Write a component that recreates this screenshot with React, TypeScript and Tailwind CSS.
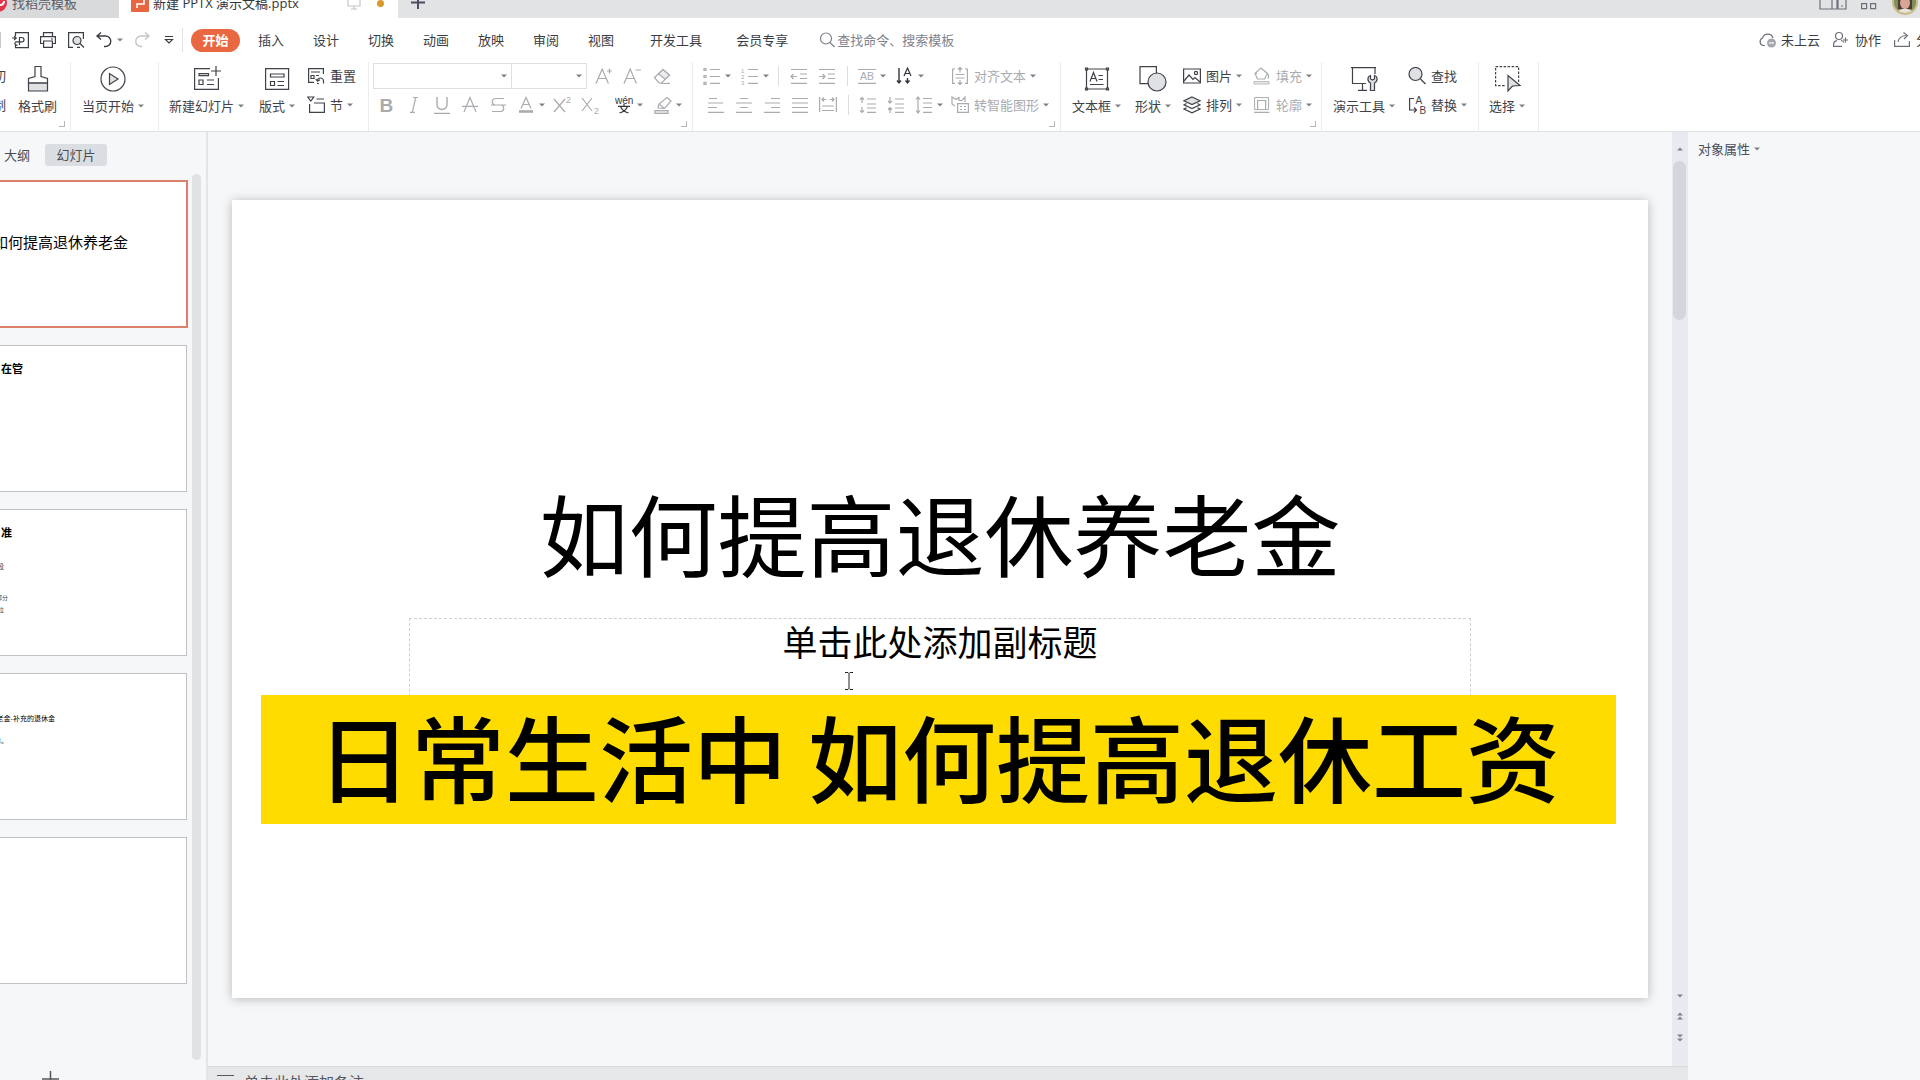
import type { ReactNode } from "react";
import clsx from "clsx";

interface IconProps {
  size?: number;
  children: ReactNode;
  className?: string;
}

// Line icon on a square grid; small icons use 18, large ones 28
function Icon({ size = 18, children, className }: IconProps) {
  return (
    <svg
      width={size}
      height={size}
      viewBox={`0 0 ${size} ${size}`}
      fill="none"
      stroke="currentColor"
      strokeWidth="1.2"
      className={clsx("shrink-0", className)}
      aria-hidden="true"
    >
      {children}
    </svg>
  );
}

function Caret({ up = false }: { up?: boolean }) {
  return (
    <svg width="6" height="4" viewBox="0 0 6 4" className="shrink-0 text-[#7d8087]" aria-hidden="true">
      <path d={up ? "M0 3.5h6L3 .5z" : "M0 .5h6L3 3.5z"} fill="currentColor" />
    </svg>
  );
}

function IconText({ x, y, size, children, bold }: { x: number; y: number; size: number; children: string; bold?: boolean }) {
  return (
    <text x={x} y={y} fontSize={size} fill="currentColor" stroke="none" fontWeight={bold ? 700 : 400} className="font-['Liberation_Sans',sans-serif]">
      {children}
    </text>
  );
}

interface ToolProps {
  label: string;
  children: ReactNode;
  caret?: boolean;
  active?: boolean;
  className?: string;
}

function Tool({ label, children, caret, active, className }: ToolProps) {
  return (
    <button
      type="button"
      aria-label={label}
      className={clsx(
        "flex h-7 shrink-0 items-center gap-1 pl-[5px]",
        caret ? "w-9" : "w-7",
        active ? "text-[#33363c]" : "text-[#a9abaf]",
        className
      )}
    >
      {children}
      {caret && <Caret />}
    </button>
  );
}

function LabelTool({ label, icon, caret, disabled }: { label: string; icon: ReactNode; caret?: boolean; disabled?: boolean }) {
  return (
    <button
      type="button"
      className={clsx("flex h-7 items-center gap-1 whitespace-nowrap", disabled ? "text-[#a9abaf]" : "text-[#3f4248]")}
    >
      {icon}
      <span className="pl-px">{label}</span>
      {caret && <Caret />}
    </button>
  );
}

function BigTool({ label, icon, caret }: { label: string; icon: ReactNode; caret?: boolean }) {
  return (
    <button type="button" className="flex flex-col items-center gap-[3px] pt-[3px] whitespace-nowrap text-[#3f4248]">
      {icon}
      <span className="flex items-center gap-1 leading-5">
        {label}
        {caret && <Caret />}
      </span>
    </button>
  );
}

function Group({ children, className, corner }: { children: ReactNode; className: string; corner?: boolean }) {
  return (
    <div className={clsx("relative flex shrink-0 items-start border-r border-[#ececee]", className)}>
      {children}
      {corner && <span className="absolute right-[5px] bottom-1 size-[6px] border-r border-b border-[#b5b7bb]" />}
    </div>
  );
}

function Rows({ children, className }: { children: ReactNode; className?: string }) {
  return <div className={clsx("flex flex-col gap-px", className)}>{children}</div>;
}

function Divider({ className }: { className: string }) {
  return (
    <span className={clsx("flex h-5 shrink-0 justify-center", className)}>
      <span className="w-px bg-[#dcdde0]" />
    </span>
  );
}

function Dropdown({ label, className }: { label: string; className: string }) {
  return (
    <div className={clsx("relative", className)}>
      <select aria-label={label} className="size-full appearance-none bg-white px-2 outline-none">
        <option value="" />
      </select>
      <span className="pointer-events-none absolute inset-y-0 right-1 flex items-center">
        <Caret />
      </span>
    </div>
  );
}

function TabBar() {
  return (
    <header className="flex h-[18px] shrink-0 items-end overflow-hidden bg-[#e1e3e4]">
      <button type="button" className="flex h-[30px] w-[119px] shrink-0 items-center gap-1 bg-[#d8dadc] text-[#5c5f66]">
        <svg width="8" height="18" viewBox="0 0 8 18" className="shrink-0" aria-hidden="true">
          <circle cx="-2" cy="9" r="9" fill="#e3324a" />
          <path d="M0 11q4 0 4-4" stroke="#fff" strokeWidth="2" fill="none" />
        </svg>
        找稻壳模板
      </button>
      <button
        type="button"
        className="flex h-[30px] w-[279px] shrink-0 items-center bg-white pl-3 font-['Open_Sans','Noto_Sans_CJK_SC',sans-serif] whitespace-nowrap text-[#33363c]"
      >
        <svg width="18" height="18" viewBox="0 0 18 18" className="mr-1 shrink-0" aria-hidden="true">
          <rect width="18" height="18" rx="1" fill="#e8663f" />
          <path d="M4 5h9v5H6v4" stroke="#fff" strokeWidth="1.6" fill="none" />
        </svg>
        新建 PPTX 演示文稿.pptx
        <Icon size={14} className="mr-4 ml-auto text-[#c3c5c9]">
          <path d="M1 1h12v9H1zM7 10v3M4 13h6" />
        </Icon>
        <span className="mr-[14px] size-[7px] rounded-full bg-[#d99a2b]" />
      </button>
      <button type="button" aria-label="新建标签" className="ml-[13px] flex h-[30px] items-center text-[#4b4d66]">
        <Icon size={14}>
          <path d="M7 0v13M0 6.500h14" strokeWidth="2" />
        </Icon>
      </button>
      <div className="ml-auto flex h-[30px] items-center text-[#6d7079]">
        <Icon size={28}>
          <path d="M1 4h12v16H1zM13 4h5v16h-5M19 8h8v12h-8zM22 17h2" />
        </Icon>
        <Icon size={28} className="ml-2">
          <path d="M6.600 4.600h5v5h-5zM15.600 4.600h5v5h-5zM6.600 14.600h5v5h-5zM15.600 14.600h5v5h-5z" />
        </Icon>
        <svg width="28" height="28" viewBox="0 0 28 28" className="mr-px ml-2" aria-hidden="true">
          <circle cx="14" cy="13" r="13" fill="#cdbb8a" />
          <circle cx="14" cy="13" r="11" fill="#7d8f5c" />
          <path d="M7 10q7-8 14 0v10H7z" fill="#4d3b33" />
          <ellipse cx="14" cy="14" rx="5" ry="6" fill="#d9a594" />
          <path d="M7 22q7-5 14 0q-7 4-14 0" fill="#e9e2dc" />
        </svg>
      </div>
    </header>
  );
}

const MENUS = ["插入", "设计", "切换", "动画", "放映", "审阅", "视图"];

function MenuBar() {
  return (
    <div className="flex h-11 shrink-0 items-center overflow-hidden bg-white whitespace-nowrap text-[#3a3d43]">
      <div className="flex shrink-0 items-center">
        <span className="h-4 w-px bg-[#c4c6ca]" />
        <button type="button" aria-label="输出为PDF" className="ml-[10px]">
          <Icon>
            <path d="M4.500 5V1.600h12.900v15H4.500V13M1 7h4l-1.800-2M5 7 3.200 9M8.500 14V6.500h2.300a2.200 2.200 0 0 1 0 4.400H5.500a1.600 1.600 0 0 0 0 3.200h1" />
          </Icon>
        </button>
        <button type="button" aria-label="打印" className="ml-[10px]">
          <Icon>
            <path d="M4.500 5V1.600h9V5M4.500 12.500H1.600V5.600h14.800v6.900h-2.900M4.600 10h8.800v6.400H4.600z" />
            <path d="M12 8h2" />
          </Icon>
        </button>
        <button type="button" aria-label="打印预览" className="ml-[10px]">
          <Icon>
            <path d="M6 16.400H1.600V1.600h14.800V8" />
            <circle cx="10" cy="9.500" r="4" fill="#dfe1e4" />
            <path d="m13 12.500 4 4M10 16.400h3" />
          </Icon>
        </button>
        <button type="button" aria-label="撤销" className="ml-[10px] flex items-center gap-1">
          <Icon>
            <path d="M6 1.500 2 5l4 3.500M2 5h8.500a5 5 0 0 1 0 10.500H9" strokeWidth="1.400" />
          </Icon>
          <Caret />
        </button>
        <button type="button" aria-label="恢复" className="ml-[10px] text-[#c3c5c9]">
          <Icon>
            <path d="m12 1.500 4 3.500-4 3.500M16 5H8a5 5 0 0 0 0 10.500h1" strokeWidth="1.400" />
          </Icon>
        </button>
        <button type="button" aria-label="自定义快速访问工具栏" className="ml-[13px]">
          <Icon size={10}>
            <path d="M1 1.500h8M1.500 4.500 5 8l3.500-3.500z" />
          </Icon>
        </button>
        <span className="ml-2 h-6 w-px bg-[#e3e4e6]" />
      </div>

      <nav className="flex shrink-0 items-center">
        <button type="button" className="ml-2 h-[23px] w-[49px] rounded-full bg-[#ea6841] font-bold text-white">
          开始
        </button>
        <div className="ml-[18px] flex gap-[29px]">
          {MENUS.map((m) => (
            <button key={m} type="button">
              {m}
            </button>
          ))}
        </div>
        <div className="ml-9 flex gap-[34px]">
          <button type="button">开发工具</button>
          <button type="button">会员专享</button>
        </div>
      </nav>

      <label className="ml-[31px] flex items-center text-[#7f828d]">
        <Icon>
          <circle cx="7" cy="7.500" r="5.500" />
          <path d="m11 11.500 4.500 4.500" />
        </Icon>
        <input
          type="text"
          aria-label="查找命令"
          placeholder="查找命令、搜索模板"
          className="w-32 outline-none placeholder:text-[#7f828d] placeholder:opacity-100"
        />
      </label>

      <div className="-mr-[22px] ml-auto flex shrink-0 items-center">
        <button type="button" className="flex items-center gap-[5px]">
          <Icon>
            <path d="M7 14.500H5a4 4 0 0 1-.5-7.500 5.500 5.500 0 0 1 10.500 0" stroke="#6d7079" />
            <circle cx="13.500" cy="12" r="4.500" fill="#a3a6ad" stroke="none" />
            <path d="M11 12h5" stroke="#fff" />
          </Icon>
          未上云
        </button>
        <button type="button" className="ml-3 flex items-center gap-[5px]">
          <Icon className="text-[#6d7079]">
            <circle cx="7" cy="5" r="3.500" />
            <path d="M10 15.400H1.600v-2q0-3 3.400-3.800M9 9.500q2 .3 3 2M11 9h5M13.500 6.500v5" />
          </Icon>
          协作
        </button>
        <button type="button" className="ml-3 flex items-center gap-[5px]">
          <Icon className="text-[#6d7079]">
            <path d="M1.600 9v6.400h14.800V10M5 11q1-6 8-6.500M10.500 1.500l4 3-3.500 3.500" />
          </Icon>
          分享
        </button>
      </div>
    </div>
  );
}

function Ribbon() {
  return (
    <div className="flex h-[70px] shrink-0 overflow-hidden border-b border-[#e2e3e5] bg-white">
      <Group className="w-[71px]" corner>
        <Rows className="w-[6px] items-end overflow-hidden text-[#3f4248]">
          <button type="button" className="h-7">切</button>
          <button type="button" className="h-7">制</button>
        </Rows>
        <div className="ml-3">
          <BigTool
            label="格式刷"
            icon={
              <Icon size={28}>
                <path d="M4.500 18h19v8h-19z" fill="#dfe1e4" />
                <path d="M4.500 18v-4.500l6.500-2V1.500h6v10l6.500 2V18z" />
              </Icon>
            }
          />
        </div>
      </Group>

      <Group className="w-[88px] pl-[11px]">
        <BigTool
          label="当页开始"
          caret
          icon={
            <Icon size={28}>
              <circle cx="14" cy="14" r="12" />
              <path d="M10.500 8.500v11l8.500-5.500z" fill="#dfe1e4" />
            </Icon>
          }
        />
      </Group>

      <Group className="w-[210px] pl-[10px]">
        <BigTool
          label="新建幻灯片"
          caret
          icon={
            <Icon size={28}>
              <path d="M17 3.600H1.600v20.800h23.800V13M18 6h10M23 1v10M14 15h7M14 19.500h7" />
              <path d="M6 15h4v4.500H6zM6 8.600h9.500v2H6z" />
            </Icon>
          }
        />
        <div className="ml-[15px]">
          <BigTool
            label="版式"
            caret
            icon={
              <Icon size={28}>
                <path d="M2.600 3.600h23v20.800h-23zM7.500 9h13.500v3H7.500zM7.500 16.500h4v4h-4zM14.500 16.500H21M14.500 20.500H21" />
              </Icon>
            }
          />
        </div>
        <Rows className="ml-3">
          <LabelTool
            label="重置"
            icon={
              <Icon>
                <path d="M7 15.400H1.600V1.600h14.800V7M4 5h9M4 8.500h3v3H4zM9 8.500h3M10 16.500h2M16.500 16.500v-2.500a3 3 0 0 0-6 0M8.800 12l1.700 2.300 2.500-1.500" />
              </Icon>
            }
          />
          <LabelTool
            label="节"
            caret
            icon={
              <Icon>
                <path d="M.8 1h6L3.800 5zM9.500 3h7.500M2.600 8v8.400h14.800V7H7" />
              </Icon>
            }
          />
        </Rows>
      </Group>

      <Group className="w-[324px] pl-[3px]" corner>
        <Rows>
          <div className="flex h-7 items-center">
            <div className="ml-px flex h-[26px] w-[214px] border border-[#dfe0e2]">
              <Dropdown label="字体" className="w-[138px] border-r border-[#dfe0e2]" />
              <Dropdown label="字号" className="flex-1" />
            </div>
            <Tool label="增大字号" className="ml-[3px]">
              <Icon>
                <path d="M1 16.500 7.200 2l6.200 14.500M3.400 11.500H11M14.500 1.500v5M12 4h5" />
              </Icon>
            </Tool>
            <Tool label="减小字号">
              <Icon>
                <path d="M1 16.500 7.200 2l6.200 14.500M3.400 11.500H11M12.500 3H18" />
              </Icon>
            </Tool>
            <Tool label="清除格式" className="ml-[2px]">
              <Icon>
                <path d="m1.500 10.500 8.500-8 6.500 5.500-8 8H6z" />
                <path d="m5.500 6.700 6.700 5.600 4.300-4.300L10 2.500z" fill="#ececee" />
                <path d="M8 16.400h9" />
              </Icon>
            </Tool>
          </div>
          <div className="flex h-7 items-center">
            <Tool label="加粗">
              <Icon>
                <IconText x={2.5} y={15.5} size={19} bold>B</IconText>
              </Icon>
            </Tool>
            <Tool label="倾斜">
              <Icon>
                <path d="M8 1.500h5M5 16.400h5M10.700 1.500 7.300 16.400" />
              </Icon>
            </Tool>
            <Tool label="下划线">
              <Icon>
                <path d="M4 1v7.500a5 5 0 0 0 10 0V1M1 17.400h16" strokeWidth="1.400" />
              </Icon>
            </Tool>
            <Tool label="删除线">
              <Icon>
                <path d="M3 16 9 1.500 15 16M1 10.400h16" />
              </Icon>
            </Tool>
            <Tool label="阴影">
              <Icon>
                <path d="M15 2.500H6a3.300 3.300 0 0 0 0 6.500h6a3.300 3.300 0 0 1 0 6.500H3M2 9h15" />
              </Icon>
            </Tool>
            <Tool label="字体颜色" caret>
              <Icon>
                <path d="M4 12.500 9 1.500l5 11M6 8.500h6" />
                <path d="M2 15.500h14" strokeWidth="2.600" />
              </Icon>
            </Tool>
            <Tool label="上标">
              <Icon>
                <path d="m1 3 11 13M12 3 1 16" />
                <IconText x={13} y={7} size={9}>2</IconText>
              </Icon>
            </Tool>
            <Tool label="下标">
              <Icon>
                <path d="m1 2 10 13M11 2 1 15" />
                <IconText x={13} y={17.5} size={9}>2</IconText>
              </Icon>
            </Tool>
            <Tool label="拼音" caret active className="ml-[6px]">
              <Icon>
                <IconText x={0} y={7.5} size={10}>wén</IconText>
                <path d="M3 10.400h12M9 8v2M5.500 10.500q2 5 8 6.500M12.500 10.500q-2 5-8 6.500" />
              </Icon>
            </Tool>
            <Tool label="突出显示" caret className="ml-[3px]">
              <Icon>
                <path d="m4 12 1-4 8-6.500L17 5l-6.500 7.500zM5 8l5.500 4.500" />
                <path d="M1 14.600h13v2.800H1z" fill="#ececee" />
              </Icon>
            </Tool>
          </div>
        </Rows>
      </Group>

      <Group className="w-[368px]" corner>
        <Rows className="w-[253px]">
          <div className="flex h-7 items-center pl-[5px]">
            <Tool label="项目符号" caret>
              <Icon>
                <path d="M7 2.500h10M7 9.500h10M7 16.400h10" />
                <path d="M1 1.500h2v2H1zM1 8.500h2v2H1zM1 15.400h2v2H1z" />
              </Icon>
            </Tool>
            <Tool label="编号" caret className="ml-[2px]">
              <Icon>
                <path d="M7 2.500h10M7 9.500h10M7 16.400h10" />
                <IconText x={0} y={5.500} size={6}>1</IconText>
                <IconText x={0} y={11.500} size={6}>2</IconText>
                <IconText x={0} y={18} size={6}>3</IconText>
              </Icon>
            </Tool>
            <Divider className="w-[13px]" />
            <Tool label="减少缩进">
              <Icon>
                <path d="M1 2.500h16M10 7h7M10 11.500h7M1 16.400h16M7 9.500H1M3.500 7 1 9.500 3.500 12" />
              </Icon>
            </Tool>
            <Tool label="增加缩进">
              <Icon>
                <path d="M1 2.500h16M10 7h7M10 11.500h7M1 16.400h16M1 9.500h6M4.500 7 7 9.500 4.500 12" />
              </Icon>
            </Tool>
            <Divider className="w-3" />
            <Tool label="文字间距" caret>
              <Icon>
                <path d="M0 2.500h18M0 16.400h18" />
                <IconText x={2} y={13.200} size={10.5}>AB</IconText>
              </Icon>
            </Tool>
            <Tool label="文字方向" caret active className="ml-[2px]">
              <Icon>
                <path d="M3 1v15M1 13.500 3 16l2-2.500M11.500 11v5M9.500 13.500l2 2.500 2-2.500" strokeWidth="1.400" />
                <path d="m8 9 3.500-8L15 9M9.200 6.500h4.600" />
              </Icon>
            </Tool>
          </div>
          <div className="flex h-7 items-center pl-[9px]">
            <Tool label="左对齐">
              <Icon>
                <path d="M2 2.500h8M1 7h15M1 11.500h9M1 16.400h16" />
              </Icon>
            </Tool>
            <Tool label="居中">
              <Icon>
                <path d="M5 2.500h8M1 7h16M5 11.500h8M1 16.400h16" />
              </Icon>
            </Tool>
            <Tool label="右对齐">
              <Icon>
                <path d="M8 2.500h9M2 7h15M8 11.500h9M1 16.400h16" />
              </Icon>
            </Tool>
            <Tool label="两端对齐">
              <Icon>
                <path d="M1 2.500h16M1 7h16M1 11.500h16M1 16.400h16" />
              </Icon>
            </Tool>
            <Tool label="分散对齐">
              <Icon>
                <path d="M.6 1v15M17.400 1v15M3 3.500h4.500M5 1.500 3 3.500l2 2M10.500 3.500H15M13 1.500l2 2-2 2M3 10h12M3 14.500h12" />
              </Icon>
            </Tool>
            <Divider className="w-3" />
            <Tool label="增大段距">
              <Icon>
                <path d="M8 3h9M8 8h9M8 12h9M8 16.400h9M3 7V1.500M1 3.500l2-2 2 2M3 11v5.500M1 14.500l2 2 2-2" />
              </Icon>
            </Tool>
            <Tool label="减小段距">
              <Icon>
                <path d="M8 3h9M8 8h9M8 12h9M8 16.400h9M3 1v6M1 5l2 2 2-2M3 17v-5.500M1 13.500l2-2 2 2" />
              </Icon>
            </Tool>
            <Tool label="行距" caret>
              <Icon>
                <path d="M8 2.500h9M8 7h9M8 11.500h9M8 16.400h9M3 1v16M1 3.500 3 1l2 2.500M1 14.500 3 17l2-2.500" />
              </Icon>
            </Tool>
          </div>
        </Rows>
        <Rows className="ml-[5px]">
          <LabelTool
            label="对齐文本"
            caret
            disabled
            icon={
              <Icon>
                <path d="M4 2H1.600v14.400H4M14 2h2.400v14.400H14M4.500 7.500h9M4.500 11h9M9 0v5.500M7 2.500l2-2 2 2M9 13v5M7 15.500l2 2 2-2" />
              </Icon>
            }
          />
          <LabelTool
            label="转智能图形"
            caret
            disabled
            icon={
              <Icon>
                <path d="M4 10 1 8V1l4 2.500 3-2v3h3L14 1v5M6.600 7.600h10.800v8.800H6.600zM9 10.500h2M13 10.500h2M9 13.500h2M13 13.500h2" />
              </Icon>
            }
          />
        </Rows>
      </Group>

      <Group className="w-[261px] pl-[11px]" corner>
        <BigTool
          label="文本框"
          caret
          icon={
            <Icon size={28}>
              <path d="M3.500 4h21v20h-21zM15.500 10.500H20M15.500 14.500H20M7 19.500h13.500" />
              <path d="M2.500 3h2v2h-2zM23.500 3h2v2h-2zM2.500 23h2v2h-2zM23.500 23h2v2h-2z" fill="#8a8d93" />
              <path d="m7 16.500 3.500-9 3.500 9M8.200 13.500h4.600" />
            </Icon>
          }
        />
        <div className="ml-[14px]">
          <BigTool
            label="形状"
            caret
            icon={
              <Icon size={28}>
                <path d="M1 1.600h16.400v17H1z" fill="#fff" />
                <circle cx="18" cy="17" r="9" fill="#dfe1e4" />
              </Icon>
            }
          />
        </div>
        <Rows className="ml-3">
          <LabelTool
            label="图片"
            caret
            icon={
              <Icon>
                <path d="M.6 2h16.800v14H.6z" />
                <path d="m1 14 5-6 4 4.500 2-2 5 4.500" />
                <circle cx="13" cy="6" r="1.600" />
              </Icon>
            }
          />
          <LabelTool
            label="排列"
            caret
            icon={
              <Icon>
                <path d="m9 1 8 3.800-8 3.800-8-3.800z" fill="#dfe1e4" />
                <path d="m3.500 7.500-2.500 1.300 8 3.800 8-3.800-2.500-1.300M3.500 11.700 1 13l8 3.800 8-3.800-2.500-1.300" />
              </Icon>
            }
          />
        </Rows>
        <Rows className="ml-[11px]">
          <LabelTool
            label="填充"
            caret
            disabled
            icon={
              <Icon>
                <path d="M2 6.500 8 1l6.500 5.500-3 5.500h-7zM2 6.500h2M14.500 6.500q2 2.500.5 5" />
                <path d="M1 14.600h15v2.400H1z" fill="#ececee" strokeWidth=".8" />
              </Icon>
            }
          />
          <LabelTool
            label="轮廓"
            caret
            disabled
            icon={
              <Icon>
                <path d="M1.600 1.600h14v12h-14z" strokeWidth="1" />
                <path d="M4.600 13.500v-9h8v9M1 16.400h15.500" />
              </Icon>
            }
          />
        </Rows>
      </Group>

      <Group className="w-[157px] pl-[11px]">
        <BigTool
          label="演示工具"
          caret
          icon={
            <Icon size={28}>
              <path d="M1 2.600h25M2.500 3v15.500H16M25 3v6M12.500 18.500V25M8 25.400h9" />
              <path d="M20.500 10.500v3.500l2 1 2-1v-3.500q3 1 2.500 4.500-.5 2-2.500 3v7.500h-4V18q-2-1-2.500-3-.5-3.500 2.500-4.500z" fill="#dfe1e4" />
            </Icon>
          }
        />
        <Rows className="ml-[13px]">
          <LabelTool
            label="查找"
            icon={
              <Icon>
                <circle cx="7.500" cy="7" r="6.500" fill="#dfe1e4" />
                <path d="m12.500 12 5 5" />
              </Icon>
            }
          />
          <LabelTool
            label="替换"
            caret
            icon={
              <Icon>
                <path d="M6 2.500H1.600v11.500H8M6 11.500 8.500 14 6 16.500" />
                <IconText x={7.5} y={8} size={10}>A</IconText>
                <IconText x={11.5} y={17.500} size={10}>B</IconText>
              </Icon>
            }
          />
        </Rows>
      </Group>

      <Group className="w-[60px] pl-[10px]">
        <BigTool
          label="选择"
          caret
          icon={
            <Icon size={28}>
              <path d="M2.600 1.600h23v19h-23z" strokeDasharray="2.500 1.500" />
              <path d="M15 10.500v15.500l4-4.500 7.500-.5z" fill="#fff" stroke="#fff" strokeWidth="4" />
              <path d="M15 10.500v15.500l4.500-5 7.500-.5z" fill="#dfe1e4" />
            </Icon>
          }
        />
      </Group>
    </div>
  );
}

function Thumb({ children, selected }: { children?: ReactNode; selected?: boolean }) {
  return (
    <li
      className={clsx(
        "flex flex-col overflow-hidden bg-white whitespace-nowrap text-black",
        selected ? "h-[148px] border-2 border-[#dc7f6b]" : "mr-px h-[147px] border border-[#bfc1c5]"
      )}
    >
      {children}
    </li>
  );
}

function Sidebar() {
  return (
    <aside className="flex w-[208px] shrink-0 flex-col overflow-hidden border-r-2 border-[#e4e5e8]">
      <div className="flex items-center pt-3 pb-2 pl-1 text-[#4a4d55]">
        <button type="button">大纲</button>
        <button type="button" className="ml-[15px] h-[22px] w-[62px] rounded-[3px] bg-[#dadee3]">
          幻灯片
        </button>
      </div>
      <div className="flex min-h-0 flex-1">
        {/* the list is scrolled sideways, only its right part shows */}
        <ul className="-ml-[75px] flex w-[263px] shrink-0 flex-col gap-[17px] pt-[6px]">
          <Thumb selected>
            <p className="pt-12 pr-[58px] text-right text-[15px] leading-6">如何提高退休养老金</p>
          </Thumb>
          <Thumb>
            <p className="pt-[14px] pr-[163px] text-right text-[11px] leading-4 font-bold">在管</p>
          </Thumb>
          <Thumb>
            <p className="pt-[14px] pr-[174px] text-right text-[11px] leading-4 font-bold">准</p>
            <p className="pt-5 pr-[182px] text-right text-[7px] leading-3 text-[#44474d]">段</p>
            <p className="pt-5 pr-[178px] text-right text-[6px] leading-3 text-[#44474d]">部分</p>
            <p className="pr-[182px] text-right text-[6px] leading-3 text-[#44474d]">位</p>
          </Thumb>
          <Thumb>
            <p className="pt-9 pr-[131px] text-right text-[7px] leading-4">养老金-补充的退休金</p>
            <p className="pt-[6px] pr-[178px] text-right text-[7px] leading-4">单。</p>
          </Thumb>
          <Thumb />
        </ul>
        <div className="ml-1 w-[9px] rounded-full bg-[#e1e2e5]" />
      </div>
      <button type="button" aria-label="新建幻灯片" className="flex h-5 shrink-0 items-end overflow-hidden pl-[42px] text-[#55585f]">
        <svg width="17" height="9" viewBox="0 0 17 9" stroke="currentColor" strokeWidth="1.500" aria-hidden="true">
          <path d="M8.500 0v9M0 8h17" />
        </svg>
      </button>
    </aside>
  );
}

function Slide() {
  return (
    <section className="relative flex aspect-[1415/797] flex-col items-center bg-white pt-[280px] text-black shadow-[0_1px_10px_rgba(0,0,0,0.26)]">
      <h1 className="text-[89px] leading-[104px] whitespace-nowrap">如何提高退休养老金</h1>
      <div className="mt-[34px] h-[200px] w-3/4 border border-dashed border-[#cfcfd2] text-center">
        <p className="text-[35px] leading-[43px]">单击此处添加副标题</p>
      </div>
      <svg width="10" height="18" viewBox="0 0 10 18" fill="none" stroke="#222" className="absolute top-[472px] left-[612px]" aria-hidden="true">
        <path d="M1 .5h3l1 1 1-1h3M1 17.500h3l1-1 1 1h3M5 1.500v15" />
      </svg>
      {/* caption strip over the slide */}
      <div className="absolute top-[495px] right-8 left-[29px] h-[129px] bg-[#ffdc00]">
        <p className="text-center text-[94px] leading-[121px] font-medium whitespace-nowrap">日常生活中 如何提高退休工资</p>
      </div>
    </section>
  );
}

function VerticalScroll() {
  return (
    <div className="flex w-4 flex-col items-center bg-[#e9eaf1] pr-px">
      <div className="flex h-[29px] items-center pt-1">
        <Caret up />
      </div>
      <div className="h-[159px] w-[13px] rounded-full bg-[#d5d5dc]" />
      <div className="mt-auto flex flex-col items-center gap-[14px] pb-6">
        <Caret />
        <span className="flex flex-col">
          <Caret up />
          <Caret up />
        </span>
        <span className="flex flex-col">
          <Caret />
          <Caret />
        </span>
      </div>
    </div>
  );
}

export default function App() {
  return (
    <div className="flex h-screen flex-col overflow-hidden bg-[#f5f7f9] font-['Noto_Sans_CJK_SC',sans-serif] text-[13px] leading-5">
      <TabBar />
      <MenuBar />
      <Ribbon />
      <div className="flex min-h-0 flex-1">
        <Sidebar />
        <main className="flex min-w-0 flex-1 flex-col">
          <div className="flex min-h-0 flex-1">
            <div className="min-w-0 flex-1 px-6 pt-[68px]">
              <Slide />
            </div>
            <VerticalScroll />
          </div>
          <div className="flex h-[14px] shrink-0 items-start gap-[10px] overflow-hidden border-t border-[#d9dadc] bg-[#e6e7e8] pt-[5px] pl-[9px] text-[15px] text-[#55585f]">
            <svg width="17" height="14" viewBox="0 0 17 14" stroke="currentColor" aria-hidden="true">
              <path d="M0 3.500h17M0 8.500h17" />
            </svg>
            <p>单击此处添加备注</p>
          </div>
        </main>
        <aside className="w-[232px] shrink-0 pt-[7px] pl-[10px] text-[#4a4d5c]">
          <button type="button" className="flex items-center gap-1">
            对象属性
            <Caret />
          </button>
        </aside>
      </div>
    </div>
  );
}
